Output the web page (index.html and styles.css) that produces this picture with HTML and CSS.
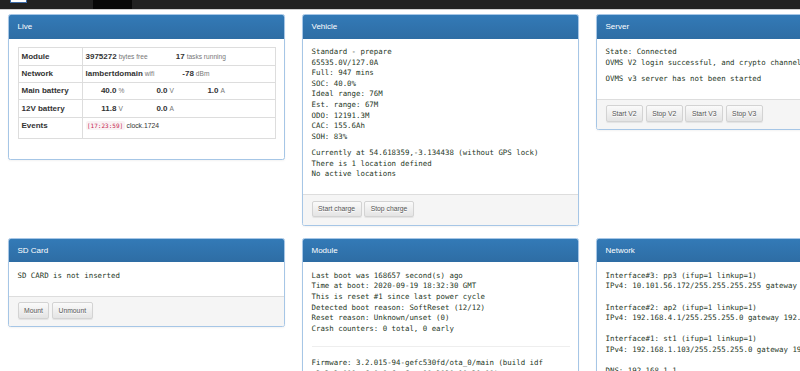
FILE: index.html
```html
<!DOCTYPE html>
<html lang="en">
<head>
    <meta charset="UTF-8" />
    <title>OVMS Dashboard</title>
    <link rel="stylesheet" href="styles.css">
</head>
<body>
    <nav class="navbar">
        <span class="brand"></span>
        <span class="nav-active"></span>
    </nav>

    <main class="dashboard">
        <section class="panel">
            <div class="panel-heading">Live</div>
            <div class="panel-body">
                <table class="metrics">
                    <tr>
                        <th>Module</th>
                        <td><div class="readings">
                            <span class="metric"><span class="value">3975272</span><span class="unit">bytes free</span></span>
                            <span class="metric"><span class="value">17</span><span class="unit">tasks running</span></span>
                        </div></td>
                    </tr>
                    <tr>
                        <th>Network</th>
                        <td><div class="readings">
                            <span class="metric"><span class="value">lambertdomain</span><span class="unit">wifi</span></span>
                            <span class="metric"><span class="value">-78</span><span class="unit">dBm</span></span>
                        </div></td>
                    </tr>
                    <tr>
                        <th>Main battery</th>
                        <td><div class="readings">
                            <span class="metric"><span class="value">40.0</span><span class="unit">%</span></span>
                            <span class="metric"><span class="value">0.0</span><span class="unit">V</span></span>
                            <span class="metric"><span class="value">1.0</span><span class="unit">A</span></span>
                        </div></td>
                    </tr>
                    <tr>
                        <th>12V battery</th>
                        <td><div class="readings">
                            <span class="metric"><span class="value">11.8</span><span class="unit">V</span></span>
                            <span class="metric"><span class="value">0.0</span><span class="unit">A</span></span>
                        </div></td>
                    </tr>
                    <tr>
                        <th>Events</th>
                        <td><div class="events"><code>[17:23:59]</code> clock.1724</div></td>
                    </tr>
                </table>
            </div>
        </section>

        <section class="panel">
            <div class="panel-heading">Vehicle</div>
            <div class="panel-body">
<pre>Standard - prepare
65535.0V/127.0A
Full: 947 mins
SOC: 40.0%
Ideal range: 76M
Est. range: 67M
ODO: 12191.3M
CAC: 155.6Ah
SOH: 83%</pre>
<pre>Currently at 54.618359,-3.134438 (without GPS lock)
There is 1 location defined
No active locations</pre>
            </div>
            <div class="panel-footer">
                <button class="btn">Start charge</button>
                <button class="btn">Stop charge</button>
            </div>
        </section>

        <section class="panel">
            <div class="panel-heading">Server</div>
            <div class="panel-body">
<pre>State: Connected
OVMS V2 login successful, and crypto channel established</pre>
<pre>OVMS v3 server has not been started</pre>
<pre class="status"></pre>
            </div>
            <div class="panel-footer">
                <button class="btn">Start V2</button>
                <button class="btn">Stop V2</button>
                <button class="btn">Start V3</button>
                <button class="btn">Stop V3</button>
            </div>
        </section>

        <section class="panel">
            <div class="panel-heading">SD Card</div>
            <div class="panel-body">
<pre>SD CARD is not inserted</pre>
<pre class="status"></pre>
            </div>
            <div class="panel-footer">
                <button class="btn">Mount</button>
                <button class="btn">Unmount</button>
            </div>
        </section>

        <section class="panel">
            <div class="panel-heading">Module</div>
            <div class="panel-body">
<pre>Last boot was 168657 second(s) ago
Time at boot: 2020-09-19 18:32:30 GMT
This is reset #1 since last power cycle
Detected boot reason: SoftReset (12/12)
Reset reason: Unknown/unset (0)
Crash counters: 0 total, 0 early</pre>
                <hr>
<pre>Firmware: 3.2.015-94-gefc530fd/ota_0/main (build idf v3.3.2-881-g6e8e9e6e Sep 19 2020 18:31:09)
Running partition: ota_0
Boot partition: ota_0</pre>
            </div>
        </section>

        <section class="panel">
            <div class="panel-heading">Network</div>
            <div class="panel-body">
<pre>Interface#3: pp3 (ifup=1 linkup=1)
IPv4: 10.101.56.172/255.255.255.255 gateway 10.64.64.64

Interface#2: ap2 (ifup=1 linkup=1)
IPv4: 192.168.4.1/255.255.255.0 gateway 192.168.4.1

Interface#1: st1 (ifup=1 linkup=1)
IPv4: 192.168.1.103/255.255.255.0 gateway 192.168.1.1

DNS: 192.168.1.1</pre>
            </div>
        </section>
    </main>
</body>
</html>
```

FILE: styles.css
```css
html,
body {
    margin: 0;
    height: 100%;
    overflow: hidden;
}

body {
    font-family: "Liberation Sans", Arial, sans-serif;
    font-size: 8px;
    line-height: 11.4px;
    color: #333;
    background-color: #fff;
}

.navbar {
    display: flex;
    height: 9px;
    background-color: #222;
    border-bottom: 1px solid #cfcfcf;
}

.brand {
    margin-left: 10px;
    width: 15px;
    height: 2px;
    background-color: #fff;
    border: 1px solid #3c6aa6;
    border-top: none;
}

.nav-active {
    margin-left: 66px;
    width: 39px;
    background-color: #080808;
}

.dashboard {
    display: grid;
    grid-template-columns: repeat(3, 277px);
    column-gap: 17px;
    align-items: start;
    padding: 4px 0 0 8px;
}

.panel {
    background-color: #fff;
    border: 1px solid #a6c6e6;
    border-radius: 2.5px;
    box-shadow: 0 1px 2px rgba(0, 0, 0, 0.05);
    margin-bottom: 12px;
    overflow: hidden;
}

.panel-heading {
    padding: 6.3px 8.5px;
    line-height: 11px;
    color: #fff;
    background: linear-gradient(#337ab7, #2e6da4);
}

.panel-body {
    padding: 8.5px;
}

.panel-footer {
    display: flex;
    gap: 2.6px;
    padding: 5.7px 8.5px 7.3px;
    background-color: #f5f5f5;
    border-top: 1px solid #ddd;
}

pre {
    margin: 0 0 5.7px;
    font-family: "DejaVu Sans Mono", monospace;
    font-size: 7.4px;
    line-height: 10.6px;
    color: #1f381f;
    white-space: pre-wrap;
}

hr {
    margin: 11.4px 0;
    border: 0;
    border-top: 1px solid #eee;
}

.metrics {
    width: 100%;
    border-collapse: collapse;
    border: 1px solid #ddd;
    margin-bottom: 11.4px;
}

.metrics th,
.metrics td {
    padding: 2.5px 3px;
    border: 1px solid #ddd;
    text-align: left;
    vertical-align: top;
}

.metrics th {
    width: 57px;
}

.readings {
    display: flex;
    align-items: baseline;
}

.metric {
    margin-right: 6px;
}

.value {
    display: inline-block;
    min-width: 31px;
    text-align: right;
    font-weight: bold;
}

.unit {
    display: inline-block;
    min-width: 12px;
    padding-left: 2px;
    font-size: 6.6px;
    color: #777;
}

.events {
    font-size: 6.8px;
    padding-bottom: 4px;
}

code {
    font-family: "DejaVu Sans Mono", monospace;
    font-size: 6px;
    color: #c7254e;
    background-color: #f9f2f4;
    padding: 1px 1.5px;
    border-radius: 2px;
}

.btn {
    font-family: "Liberation Sans", Arial, sans-serif;
    font-size: 6.8px;
    line-height: 10px;
    padding: 2.3px 5.5px;
    color: #555;
    border: 1px solid #d3d3d3;
    border-radius: 2px;
    background: linear-gradient(#fafafa, #e4e4e4);
    box-shadow: 0 1px 1px rgba(0, 0, 0, 0.075);
    text-shadow: 0 1px 0 #fff;
    cursor: pointer;
}
```
